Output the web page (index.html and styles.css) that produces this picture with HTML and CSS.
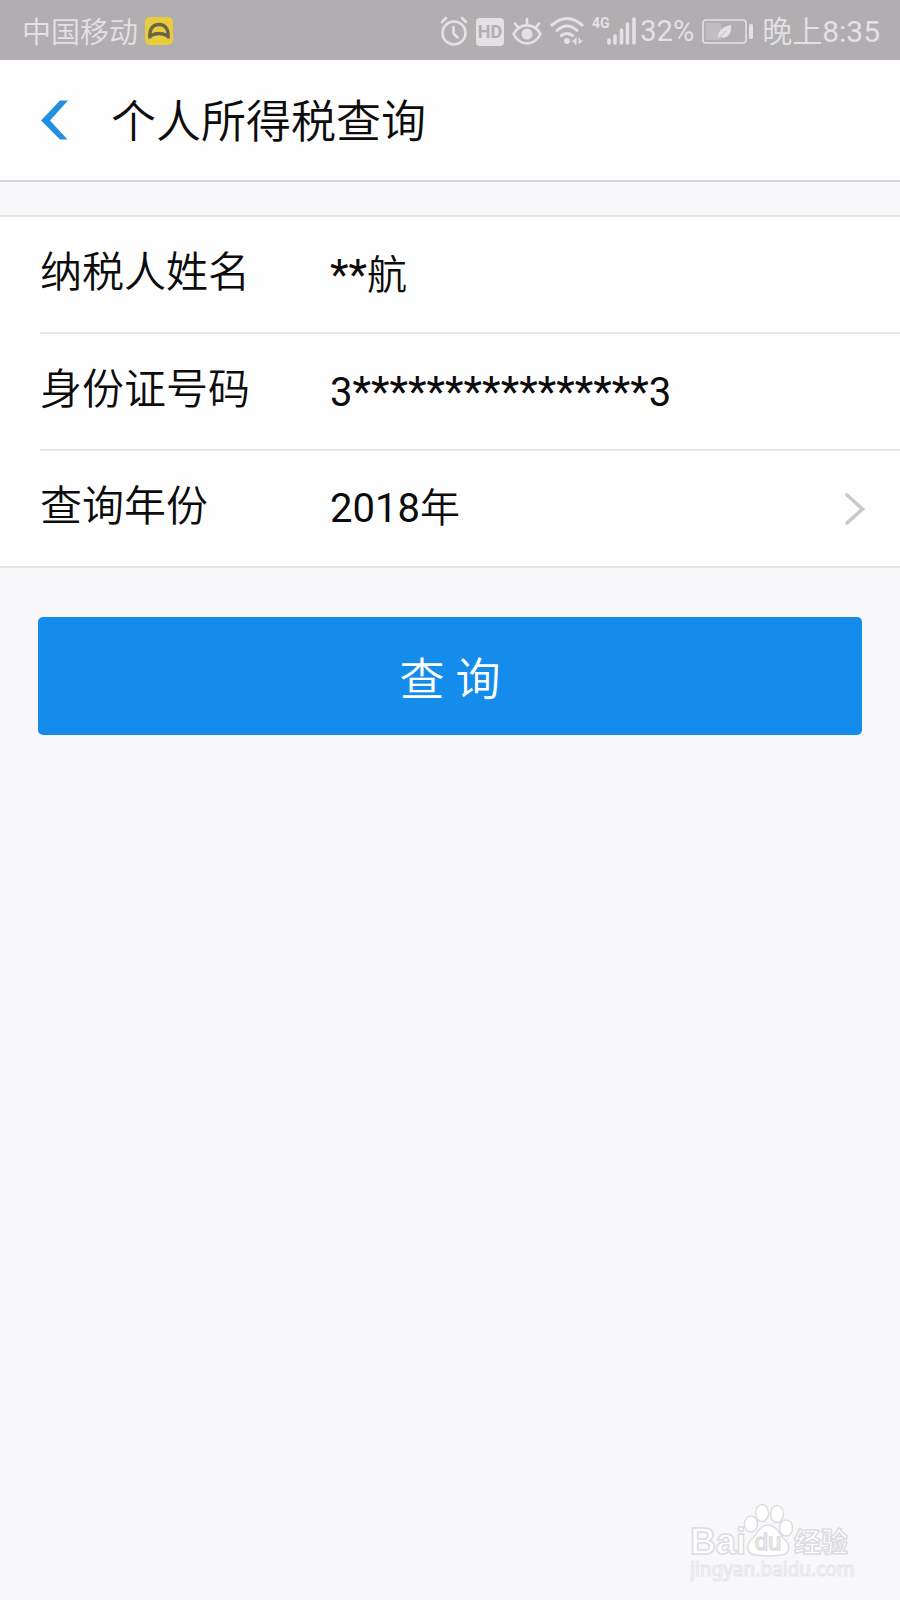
FILE: index.html
```html
<!DOCTYPE html>
<html lang="zh-CN">
<head>
<meta charset="utf-8">
<meta name="viewport" content="width=device-width, initial-scale=1">
<title>个人所得税查询</title>
<link rel="stylesheet" href="styles.css">
</head>
<body>
<div class="status">
  <div class="status-left">
    <span class="carrier">中国移动</span>
    <svg width="28" height="28" viewBox="0 0 28 28" aria-hidden="true">
      <rect width="28" height="28" rx="5" fill="#e8cc3c"/>
      <path d="M5 21.500C4 13 7 7.500 14 7.500S24 13 23 21.500M6 18.500Q14 14.500 22 18.500" fill="none" stroke="#6a6545" stroke-width="3.400"/>
    </svg>
  </div>
  <div class="status-right">
    <svg class="ico" width="28" height="32" viewBox="0 0 28 32" aria-hidden="true">
      <g fill="none" stroke="#e3e1e4" stroke-width="2.600" stroke-linecap="round">
        <circle cx="14" cy="18" r="11.500"/><path d="M13.500 12v6.500l4 4"/><path d="M2 7l4-4M22 3l4 4"/>
      </g>
    </svg>
    <svg class="ico" width="28" height="32" viewBox="0 0 28 32" role="img" aria-label="HD">
      <rect y="3" width="28" height="28" rx="4" fill="#e3e1e4"/>
      <text class="hd" x="14" y="23" text-anchor="middle">HD</text>
    </svg>
    <svg class="ico" width="30" height="32" viewBox="0 0 30 32" aria-hidden="true">
      <g fill="none" stroke="#e3e1e4" stroke-width="2.600" stroke-linecap="round">
        <path d="M1.500 19C8 7.500 22 7.500 28.500 19C22 31.500 8 31.500 1.500 19Z"/><path d="M15 4v5M3 8.500l3 4M27 8.500l-3 4"/>
      </g>
      <circle cx="15" cy="19" r="5.500" fill="#e3e1e4"/>
    </svg>
    <svg class="ico" width="34" height="32" viewBox="0 0 34 32" aria-hidden="true">
      <g fill="none" stroke="#e3e1e4" stroke-width="3" stroke-linecap="round">
        <path d="M2 10Q17-3 32 10M7 15.500Q17 6.500 27 15.500M11.500 20.500Q17 16.500 22.500 20.500"/>
      </g>
      <circle cx="17" cy="26" r="3" fill="#e3e1e4"/>
      <path d="M26.500 22v7.500h-2V27H21.500ZM28.500 22v7.500l5-4h-2.500Z" fill="#e3e1e4"/>
    </svg>
    <div class="network">
      <svg class="ico" width="44" height="32" viewBox="0 0 44 32" role="img" aria-label="4G">
        <text class="net" x="0" y="13">4G</text>
        <path d="M17 28v-3M23 28v-7M29.500 28V15M35.500 28V9M42 28V4" fill="none" stroke="#e3e1e4" stroke-width="3.600" stroke-linecap="round"/>
      </svg>
      <span class="pct">32%</span>
    </div>
    <svg class="ico" width="52" height="32" viewBox="0 0 52 32" aria-hidden="true">
      <rect x="1" y="5" width="43" height="23" rx="3" fill="none" stroke="#e3e1e4" stroke-width="1.600"/>
      <rect x="4" y="8" width="15" height="17" fill="#c0bdc1"/>
      <path d="M16 24C16 15 20 12 29 10C30 19 25 25 18 22Z" fill="#e3e1e4"/>
      <path d="M16 24L24 16" stroke="#c5c2c6" stroke-width="1"/>
      <rect x="47" y="9" width="4" height="15" rx="1.500" fill="#e3e1e4"/>
    </svg>
    <span class="time">晚上8:35</span>
  </div>
</div>

<header class="header">
  <button class="back" type="button" aria-label="返回">
    <svg width="28" height="40" viewBox="0 0 28 40" aria-hidden="true"><path d="M19 .500H27L9 20.500L26.500 39.500H19L0 20.500Z" fill="#2390e2"/></svg>
  </button>
  <h1 class="title">个人所得税查询</h1>
</header>

<main>
  <form class="form">
    <div class="fields">
      <div class="row">
        <span class="label" id="name-label">纳税人姓名</span>
        <span class="value" aria-labelledby="name-label"><span class="mask">**</span>航</span>
      </div>
      <div class="row">
        <span class="label" id="id-label">身份证号码</span>
        <span class="value" aria-labelledby="id-label">3<span class="mask">****************</span>3</span>
      </div>
      <div class="row">
        <label class="label" for="year">查询年份</label>
        <select class="value year" id="year"><option>2018年</option></select>
        <svg class="chevron" width="22" height="34" viewBox="0 0 22 34" aria-hidden="true"><path d="M3 3L18.500 17L3 31" fill="none" stroke="#cbc8cc" stroke-width="3.600" stroke-linecap="round"/></svg>
      </div>
    </div>
    <button class="submit" type="button">查 询</button>
  </form>
</main>

<footer class="mark">
  <svg width="170" height="82" viewBox="0 0 170 82" role="img" aria-label="Bai du 经验 jingyan.baidu.com">
    <g fill="#fff" stroke="#dedce0" stroke-width="1.500">
      <text class="m-bai" x="0" y="50">Bai</text>
      <ellipse cx="61" cy="20" rx="6.500" ry="8"/><ellipse cx="72" cy="9" rx="6.500" ry="8.500"/><ellipse cx="87" cy="10" rx="6.500" ry="8.500"/><ellipse cx="96" cy="24" rx="6.500" ry="8"/>
      <path d="M78 21C86 21 89 29 93 34C102 41 100 51 90 51C84 52 73 52 67 51C56 51 55 40 63 34C68 29 70 21 78 21Z"/>
      <text class="m-du" x="78" y="46" text-anchor="middle">du</text>
      <text class="m-jy" x="104" y="48">经验</text>
    </g>
    <text class="m-url" x="0" y="72">jingyan.baidu.com</text>
  </svg>
</footer>
</body>
</html>
```
FILE: styles.css
```css
* { box-sizing: border-box; }

body {
  margin: 0;
  min-height: 100vh;
  display: flex;
  flex-direction: column;
  background: #f8f7fa;
  color: #0c0c0c;
  font-family: Roboto, "Noto Sans CJK SC DemiLight", "Noto Sans CJK SC", sans-serif;
}

.status {
  display: flex;
  justify-content: space-between;
  align-items: center;
  height: 60px;
  padding: 2px 20px 0 22px;
  background: #b1aeb1;
  color: #e3e1e4;
  font-size: 29px;
  line-height: 40px;
  white-space: nowrap;
}

.status-left,
.status-right,
.network {
  display: flex;
  align-items: center;
}

.status-left { gap: 7px; }
.status-right { gap: 8px; }
.network { gap: 4px; }
.ico { flex: none; }
.carrier { padding-top: 3px; }
.time { padding-top: 2px; font-size: 30px; }

.hd {
  fill: #b1aeb1;
  font: 700 18px Roboto, sans-serif;
}

.net {
  fill: #e3e1e4;
  font: 700 14px Roboto, sans-serif;
}

.header {
  display: flex;
  align-items: center;
  gap: 42px;
  height: 122px;
  padding: 0 41px;
  border-bottom: 2px solid #d6d5d8;
  background: #fefefe;
}

.back {
  display: flex;
  padding: 0;
  border: 0;
  background: none;
}

.title {
  margin: 0;
  padding-top: 6px;
  font-size: 45px;
  font-weight: 400;
  line-height: 60px;
}

main { flex: 1; }

.fields {
  margin-top: 33px;
  padding-left: 40px;
  border-top: 2px solid #e4e3e6;
  border-bottom: 2px solid #e4e3e6;
  background: #fefefe;
}

.row {
  display: flex;
  box-sizing: content-box;
  align-items: center;
  height: 115px;
  padding-right: 34px;
}

.row + .row { border-top: 2px solid #e6e5e8; }

.label {
  width: 290px;
  padding-bottom: 4px;
  font-size: 42px;
  line-height: 60px;
}

.value {
  flex: 1;
  font-size: 40px;
  line-height: 60px;
}

.mask { font-size: 43px; }

.year {
  height: 60px;
  padding: 0;
  border: 0;
  appearance: none;
  background: none;
  color: inherit;
  font-family: inherit;
}

.submit {
  display: block;
  width: calc(100% - 76px);
  height: 118px;
  margin: 49px 38px 0;
  padding: 0;
  border: 0;
  border-radius: 5px;
  background: #148cec;
  color: #fff;
  font-family: inherit;
  font-size: 45px;
}

.mark {
  display: flex;
  justify-content: flex-end;
  padding: 0 40px 14px;
}

.m-bai { font: 700 36px "Liberation Sans", sans-serif; }
.m-du { font: 400 24px "Liberation Sans", sans-serif; }
.m-jy { font: 700 27px "Noto Sans CJK SC", sans-serif; }

.m-url {
  fill: #fff;
  stroke: #e6e4e8;
  stroke-width: 1px;
  font: 400 19px "Noto Sans", sans-serif;
}
```
